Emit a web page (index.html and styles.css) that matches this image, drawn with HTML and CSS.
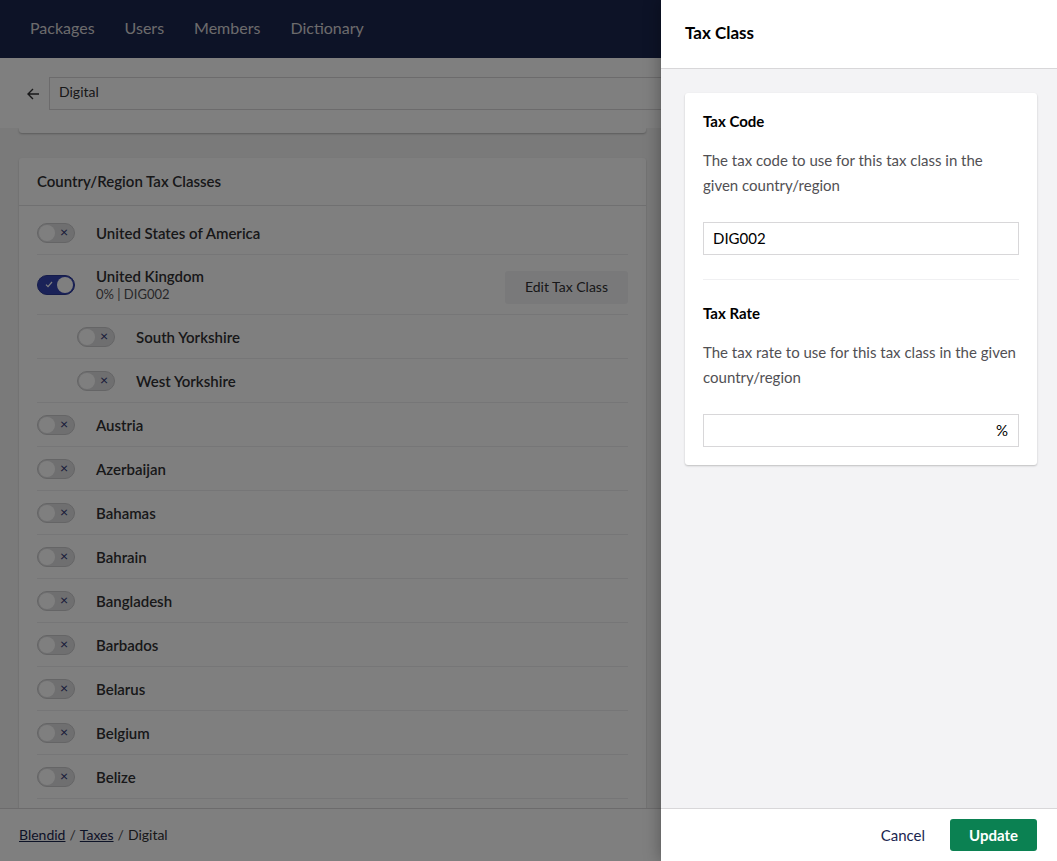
FILE: index.html
```html
<!DOCTYPE html>
<html lang="en">
<head>
<meta charset="utf-8">
<title>Tax Class</title>
<link rel="stylesheet" href="styles.css">
</head>
<body>
<div class="app">
  <div class="main">
    <header class="topbar">
      <nav class="nav">
        <span class="nav-item">Packages</span>
        <span class="nav-item">Users</span>
        <span class="nav-item">Members</span>
        <span class="nav-item">Dictionary</span>
      </nav>
    </header>
    <div class="subheader">
      <span class="back">
        <svg width="13" height="12" viewBox="0 0 13 12"><path d="M12 6H1.5M6 1L1 6l5 5" fill="none" stroke="#303033" stroke-width="1.4"/></svg>
      </span>
      <div class="name-input">Digital</div>
    </div>
    <div class="content">
      <div class="card-peek"></div>
      <section class="card">
        <div class="card-header">Country/Region Tax Classes</div>
        <div class="rows">
          <div class="row"><span class="toggle"><span class="knob"></span><span class="x">×</span></span><span class="label">United States of America</span></div>
          <div class="row row-tall">
            <span class="toggle on"><span class="check"><svg width="8" height="7" viewBox="0 0 8 7"><path d="M1 3.6l2 2L7 1" fill="none" stroke="#fff" stroke-width="1.2"/></svg></span><span class="knob"></span></span>
            <span class="label-group"><span class="label">United Kingdom</span><span class="sub">0% | DIG002</span></span>
            <span class="btn-edit">Edit Tax Class</span>
          </div>
          <div class="row row-sub"><span class="toggle"><span class="knob"></span><span class="x">×</span></span><span class="label">South Yorkshire</span></div>
          <div class="row row-sub"><span class="toggle"><span class="knob"></span><span class="x">×</span></span><span class="label">West Yorkshire</span></div>
          <div class="row"><span class="toggle"><span class="knob"></span><span class="x">×</span></span><span class="label">Austria</span></div>
          <div class="row"><span class="toggle"><span class="knob"></span><span class="x">×</span></span><span class="label">Azerbaijan</span></div>
          <div class="row"><span class="toggle"><span class="knob"></span><span class="x">×</span></span><span class="label">Bahamas</span></div>
          <div class="row"><span class="toggle"><span class="knob"></span><span class="x">×</span></span><span class="label">Bahrain</span></div>
          <div class="row"><span class="toggle"><span class="knob"></span><span class="x">×</span></span><span class="label">Bangladesh</span></div>
          <div class="row"><span class="toggle"><span class="knob"></span><span class="x">×</span></span><span class="label">Barbados</span></div>
          <div class="row"><span class="toggle"><span class="knob"></span><span class="x">×</span></span><span class="label">Belarus</span></div>
          <div class="row"><span class="toggle"><span class="knob"></span><span class="x">×</span></span><span class="label">Belgium</span></div>
          <div class="row"><span class="toggle"><span class="knob"></span><span class="x">×</span></span><span class="label">Belize</span></div>
          <div class="row"><span class="toggle"><span class="knob"></span><span class="x">×</span></span><span class="label">Benin</span></div>
        </div>
      </section>
    </div>
    <footer class="footer">
      <a class="crumb">Blendid</a><span class="sep">/</span><a class="crumb">Taxes</a><span class="sep">/</span><span class="crumb-current">Digital</span>
    </footer>
    <div class="overlay"></div>
  </div>
  <aside class="drawer">
    <div class="drawer-header">Tax Class</div>
    <div class="drawer-body">
      <div class="panel">
        <div class="field">
          <div class="field-title">Tax Code</div>
          <div class="field-desc">The tax code to use for this tax class in the given country/region</div>
          <div class="input">DIG002</div>
        </div>
        <div class="divider"></div>
        <div class="field">
          <div class="field-title">Tax Rate</div>
          <div class="field-desc">The tax rate to use for this tax class in the given country/region</div>
          <div class="input input-suffix"><span class="suffix">%</span></div>
        </div>
      </div>
    </div>
    <div class="drawer-footer">
      <span class="btn-cancel">Cancel</span>
      <span class="btn-update">Update</span>
    </div>
  </aside>
</div>
</body>
</html>
```
FILE: styles.css
```css
* { box-sizing: border-box; }
html, body { margin: 0; padding: 0; }
body {
  font-family: Lato, "Open Sans", sans-serif;
  color: #303033;
  width: 1057px;
  height: 861px;
  overflow: hidden;
  background: #f4f4f4;
}
.app {
  display: flex;
  width: 1057px;
  height: 861px;
}
.main {
  position: relative;
  width: 661px;
  flex: none;
  display: flex;
  flex-direction: column;
  overflow: hidden;
  background: #f4f4f4;
}
.topbar {
  height: 58px;
  flex: none;
  background: #1b264f;
  display: flex;
  align-items: center;
  padding-left: 30px;
  padding-bottom: 2px;
}
.nav { display: flex; gap: 30px; }
.nav-item {
  font-size: 16px;
  color: #d8d7d9;
  white-space: nowrap;
  line-height: 20px;
}
.subheader {
  height: 70px;
  flex: none;
  background: #fff;
  display: flex;
  align-items: flex-start;
  padding-top: 19px;
  padding-left: 27px;
  white-space: nowrap;
}
.back {
  width: 22px;
  height: 33px;
  display: flex;
  align-items: center;
  flex: none;
}
.name-input {
  width: 700px;
  flex: none;
  height: 33px;
  border: 1px solid #d8d7d9;
  font-size: 14px;
  line-height: 28px;
  padding-left: 9px;
  color: #303033;
}
.content {
  flex: 1;
  min-height: 0;
  overflow: hidden;
  padding: 0 15px 0 19px;
}
.card-peek {
  height: 5px;
  background: #fff;
  border-radius: 0 0 3px 3px;
  box-shadow: 0 1px 2px rgba(0,0,0,0.25);
}
.card {
  margin-top: 25px;
  background: #fff;
  border-radius: 3px;
  box-shadow: 0 1px 2px rgba(0,0,0,0.2);
}
.card-header {
  height: 48px;
  padding: 0 18px 2px;
  display: flex;
  align-items: center;
  border-bottom: 1px solid #e0e0e2;
  font-size: 15px;
  font-weight: 600;
  color: #303033;
}
.rows { padding: 5px 18px 0 18px; }
.row {
  height: 44px;
  display: flex;
  align-items: center;
  border-bottom: 1px solid #ececee;
}
.row-tall { height: 60px; }
.row-sub { padding-left: 40px; }
.toggle {
  position: relative;
  width: 38px;
  height: 20px;
  border-radius: 10px;
  background: #dedee0;
  border: 1px solid #cacacc;
  flex: none;
  margin-right: 21px;
  display: flex;
  align-items: center;
}
.toggle .knob {
  width: 16px;
  height: 16px;
  border-radius: 50%;
  background: #fff;
  margin-left: 1px;
  flex: none;
}
.toggle .x {
  font-size: 14px;
  line-height: 14px;
  color: #2c3470;
  margin-left: 5px;
  margin-top: -1px;
}
.toggle.on {
  background: #3544b1;
  border-color: #2b3896;
}
.toggle.on .check {
  width: 19px;
  display: flex;
  justify-content: center;
  padding-left: 2px;
}
.toggle.on .knob { margin-left: 0; }
.label {
  font-size: 15px;
  font-weight: 600;
  color: #303033;
  line-height: 20px;
  white-space: nowrap;
}
.label-group { display: flex; flex-direction: column; margin-top: -1px; }
.sub {
  font-size: 13px;
  color: #515054;
  line-height: 17px;
}
.btn-edit {
  margin-left: auto;
  margin-top: 5px;
  height: 33px;
  padding: 0 20px;
  background: #f3f3f5;
  border-radius: 3px;
  font-size: 14px;
  line-height: 31px;
  color: #303033;
}
.footer {
  height: 53px;
  flex: none;
  background: #fff;
  border-top: 1px solid #d8d7d9;
  display: flex;
  align-items: center;
  padding-left: 19px;
  padding-bottom: 2px;
  font-size: 14px;
  white-space: nowrap;
}
.crumb { color: #1b264f; text-decoration: underline; }
.sep { margin: 0 4px; color: #515054; }
.crumb-current { color: #303033; }
.overlay {
  position: absolute;
  inset: 0;
  background: rgba(0,0,0,0.5);
}
.drawer {
  width: 396px;
  flex: none;
  display: flex;
  flex-direction: column;
  background: #f3f3f5;
  box-shadow: 0 0 16px rgba(0,0,0,0.35);
  position: relative;
  z-index: 2;
}
.drawer-header {
  height: 69px;
  flex: none;
  background: #fff;
  border-bottom: 1px solid #d8d7d9;
  display: flex;
  align-items: center;
  padding: 0 24px 3px;
  font-size: 17px;
  font-weight: 700;
  color: #000;
}
.drawer-body {
  flex: 1;
  padding: 24px 20px 0 24px;
}
.panel {
  background: #fff;
  border-radius: 3px;
  box-shadow: 0 1px 2px rgba(0,0,0,0.22);
  padding: 18px 18px 18px;
}
.field-title {
  font-size: 15px;
  font-weight: 700;
  line-height: 20px;
  color: #000;
}
.field-desc {
  margin-top: 17px;
  font-size: 15px;
  line-height: 25px;
  color: #515054;
}
.input {
  margin-top: 24px;
  height: 33px;
  border: 1px solid #d8d7d9;
  font-size: 15px;
  line-height: 31px;
  padding: 0 9px;
  color: #000;
}
.input-suffix {
  display: flex;
  justify-content: flex-end;
}
.suffix { font-size: 15px; padding-right: 1px; }
.divider {
  height: 1px;
  background: #f0f0f2;
  margin: 24px 0 23px;
}
.drawer-footer {
  height: 53px;
  flex: none;
  background: #fff;
  border-top: 1px solid #d8d7d9;
  display: flex;
  align-items: center;
  justify-content: flex-end;
  padding-right: 20px;
  gap: 25px;
}
.btn-cancel {
  font-size: 15px;
  color: #1b264f;
}
.btn-update {
  height: 32px;
  padding: 0 19px;
  background: #0b8152;
  color: #fff;
  border-radius: 3px;
  font-size: 15px;
  font-weight: 700;
  line-height: 32px;
}
```
